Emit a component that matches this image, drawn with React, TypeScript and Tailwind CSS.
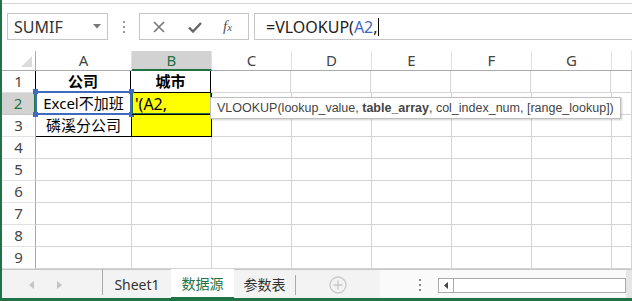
import React from "react";

const cols = ["A", "B", "C", "D", "E", "F", "G", ""];
const colW = ["w-[96px]", "w-[80px]", "w-[80px]", "w-[80px]", "w-[80px]", "w-[80px]", "w-[80px]", "flex-1"];

function ColHeader() {
  return (
    <div className="flex h-[20px] border-b border-[#ababab]">
      <div className="relative w-[34px] shrink-0 border-r border-[#ababab] bg-white">
        <svg className="absolute right-[3px] bottom-[3px]" width="11" height="11" viewBox="0 0 11 11">
          <polygon points="11,0 11,11 0,11" fill="#dcdcdc" />
        </svg>
      </div>
      {cols.map((c, i) => (
        <div
          key={i}
          className={`${colW[i]} shrink-0 flex items-center justify-center text-[15px] border-r border-[#e1e1e1] ${
            c === "B" ? "bg-[#d2d2d2] text-[#217346] border-b-2 border-b-[#217346] -mb-px" : "bg-white text-[#444]"
          }`}
        >
          {c}
        </div>
      ))}
    </div>
  );
}

function Row({ n, children }: { n: number; children?: React.ReactNode }) {
  const active = n === 2;
  return (
    <div className="flex h-[22px]">
      <div
        className={`w-[34px] shrink-0 flex items-center justify-center text-[15px] border-b ${
          active
            ? "bg-[#d2d2d2] text-[#217346] border-r-2 border-r-[#217346] border-b-[#c6c6c6]"
            : "bg-white text-[#444] border-r border-r-[#ababab] border-b-[#e1e1e1]"
        }`}
      >
        {n}
      </div>
      {children}
    </div>
  );
}

function Empty({ w }: { w: string }) {
  return <div className={`${w} shrink-0 border-r border-b border-[#d4d4d4]`} />;
}

export default function App() {
  return (
    <div
      className="relative w-[632px] h-[301px] overflow-hidden bg-white border-l-2 border-b-[3px] border-[#217346] flex flex-col"
      style={{ fontFamily: '"Noto Sans", "Noto Sans CJK SC", sans-serif' }}
    >
      {/* ribbon edge */}
      <div className="h-[4px] shrink-0 border-b border-[#d5d5d5]" />

      {/* formula bar */}
      <div className="h-[47px] shrink-0 flex items-start pt-[9px] pl-[5px]">
        <div className="w-[101px] h-[27px] border border-[#c6c6c6] flex items-center pl-[6px] pr-[6px] text-[16px] text-[#333]">
          <span className="flex-1">SUMIF</span>
          <svg width="8" height="5" viewBox="0 0 8 5">
            <polygon points="0,0 8,0 4,4.5" fill="#777" />
          </svg>
        </div>
        <div className="w-[31px] h-[27px] flex flex-col items-center justify-center gap-[3px]">
          <span className="w-[2px] h-[2px] bg-[#999]" />
          <span className="w-[2px] h-[2px] bg-[#999]" />
          <span className="w-[2px] h-[2px] bg-[#999]" />
        </div>
        <div className="w-[110px] h-[27px] border border-[#c6c6c6] flex items-center">
          <svg className="ml-[13px]" width="12" height="12" viewBox="0 0 12 12">
            <path d="M1 1 L11 11 M11 1 L1 11" stroke="#777" strokeWidth="1.6" />
          </svg>
          <svg className="ml-[23px]" width="14" height="12" viewBox="0 0 14 12">
            <path d="M1 6.5 L5 10.5 L13 2" stroke="#666" strokeWidth="2.4" fill="none" />
          </svg>
          <span
            className="ml-[21px] italic text-[15px] text-[#555]"
            style={{ fontFamily: '"Liberation Serif", serif' }}
          >
            f<span className="text-[11px]">x</span>
          </span>
        </div>
        <div className="ml-[5px] flex-1 h-[27px] border border-r-0 border-[#c6c6c6] flex items-center pl-[11px] text-[16px] text-[#222]">
          <span>=VLOOKUP(</span>
          <span className="text-[#3e6bc0]">A2</span>
          <span>,</span>
          <span className="w-px h-[18px] bg-black" />
        </div>
      </div>

      {/* grid */}
      <div className="shrink-0">
        <ColHeader />
        <Row n={1}>
          <div className="w-[96px] shrink-0 border-r border-b border-black border-l border-l-black -ml-px flex items-center justify-center font-bold text-[15px] text-black">
            公司
          </div>
          <div className="w-[80px] shrink-0 border-r border-b border-black flex items-center justify-center font-bold text-[15px] text-black">
            城市
          </div>
          {colW.slice(2).map((w, i) => (
            <Empty key={i} w={w} />
          ))}
        </Row>
        <Row n={2}>
          <div className="relative w-[96px] shrink-0 border-b border-r border-black flex items-center justify-center text-[15px] text-black">
            <div className="absolute -left-[1px] -top-[2px] right-[-1px] bottom-[-1px] border-2 border-[#3e6bc0]" />
            <span className="absolute -left-[3px] -top-[4px] w-[5px] h-[5px] bg-[#3e6bc0]" />
            <span className="absolute -right-[3px] -top-[4px] w-[5px] h-[5px] bg-[#3e6bc0]" />
            <span className="absolute -left-[3px] -bottom-[3px] w-[5px] h-[5px] bg-[#3e6bc0]" />
            <span className="absolute -right-[3px] -bottom-[3px] w-[5px] h-[5px] bg-[#3e6bc0]" />
            Excel不加班
          </div>
          <div className="relative w-[80px] shrink-0 bg-[#ffff00] border-r border-b border-black flex items-center pl-[3px] text-[16px] text-black overflow-hidden">
            <div className="absolute -left-[1px] -top-[2px] right-[-1px] bottom-[-1px] border-2 border-[#217346]" />
            <span>'(A2,</span>
          </div>
          {colW.slice(2).map((w, i) => (
            <Empty key={i} w={w} />
          ))}
        </Row>
        <Row n={3}>
          <div className="w-[96px] shrink-0 border-r border-b border-black flex items-center justify-center text-[15px] text-black">
            磷溪分公司
          </div>
          <div className="w-[80px] shrink-0 bg-[#ffff00] border-r border-b border-black" />
          {colW.slice(2).map((w, i) => (
            <Empty key={i} w={w} />
          ))}
        </Row>
        {[4, 5, 6, 7, 8, 9].map((n) => (
          <Row key={n} n={n}>
            {colW.map((w, i) => (
              <Empty key={i} w={w} />
            ))}
          </Row>
        ))}
      </div>

      {/* sheet tabs */}
      <div className="flex-1 flex border-t border-[#c6c6c6] bg-[#f3f3f3] text-[14px]">
        <div className="w-[100px] shrink-0 flex items-center">
          <svg className="ml-[27px]" width="5" height="8" viewBox="0 0 5 8">
            <polygon points="5,0 5,8 0,4" fill="#c4c4c4" />
          </svg>
          <svg className="ml-[23px]" width="5" height="8" viewBox="0 0 5 8">
            <polygon points="0,0 0,8 5,4" fill="#c4c4c4" />
          </svg>
        </div>
        <div className="w-[69px] shrink-0 flex items-center justify-center border-l border-[#aaa] my-[5px] -mt-px text-[#333]">
          <span className="mt-[4px]">Sheet1</span>
        </div>
        <div className="w-[63px] shrink-0 -mt-px bg-white border-b-[3px] border-[#217346] flex items-center justify-center text-[#217346]">
          数据源
        </div>
        <div className="w-[62px] shrink-0 flex items-center justify-center border-r border-[#aaa] my-[5px] text-[#333]">
          <span className="-mt-[1px]">参数表</span>
        </div>
        <div className="w-[84px] shrink-0 flex items-center justify-center">
          <svg width="18" height="18" viewBox="0 0 18 18">
            <circle cx="9" cy="9" r="8" fill="none" stroke="#c8c8c8" strokeWidth="1.3" />
            <path d="M9 4.5 V13.5 M4.5 9 H13.5" stroke="#c8c8c8" strokeWidth="1.4" />
          </svg>
        </div>
        <div className="flex-1 flex items-center bg-[#fafafa]">
          <div className="w-[28px] flex flex-col items-center gap-[3px] ml-[26px] -mr-[6px]">
            <span className="w-[2px] h-[2px] bg-[#888]" />
            <span className="w-[2px] h-[2px] bg-[#888]" />
            <span className="w-[2px] h-[2px] bg-[#888]" />
          </div>
          <div className="ml-[10px] w-[188px] h-[15px] border border-[#ababab] bg-white flex">
            <div className="w-[15px] border-r border-[#ababab] flex items-center justify-center">
              <svg width="4" height="7" viewBox="0 0 4 7">
                <polygon points="4,0 4,7 0,3.5" fill="#444" />
              </svg>
            </div>
          </div>
          <div className="flex-1 h-full bg-[#e6e6e6]" />
        </div>
      </div>

      {/* function tooltip */}
      <div
        className="absolute left-[208px] top-[97px] h-[22px] px-[6px] flex items-center bg-white border border-[#bebebe] shadow-[1px_1px_2px_rgba(0,0,0,0.2)] text-[12.5px] text-[#444] whitespace-nowrap"
        style={{ fontFamily: '"Liberation Sans", sans-serif' }}
      >
        VLOOKUP(lookup_value,&nbsp;<b className="font-bold">table_array</b>, col_index_num, [range_lookup])
      </div>
    </div>
  );
}
